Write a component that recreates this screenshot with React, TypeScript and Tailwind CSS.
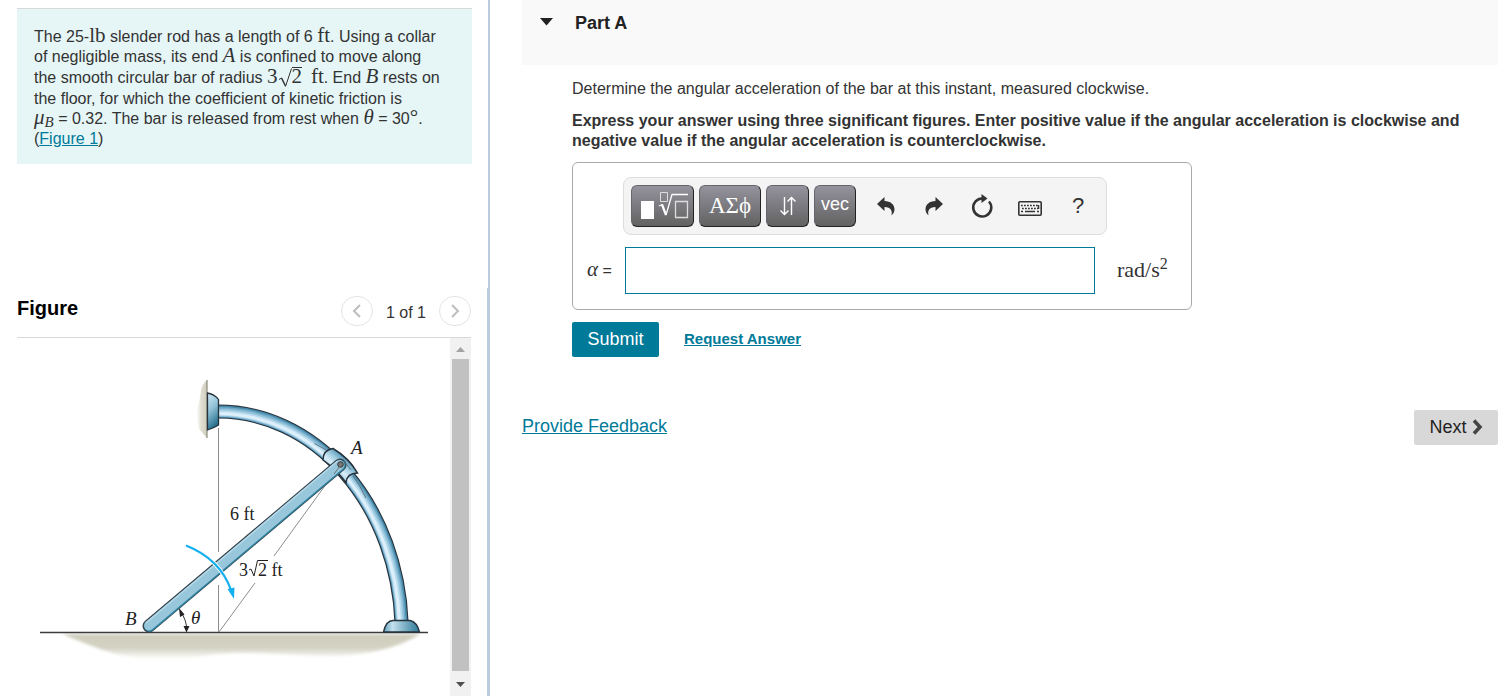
import React from 'react';

interface MathProps {
  children: React.ReactNode;
  italic?: boolean;
}

const MathText: React.FC<MathProps> = ({ children, italic }) => (
  <span className={`font-['Liberation_Serif',serif] text-[21px] leading-[0px] ${italic ? 'italic' : ''}`}>{children}</span>
);

const SquareRoot = () => (
  <span className="whitespace-nowrap font-['Liberation_Serif',serif] text-[21px] leading-[0px]">
    3
    <svg viewBox="0 0 14 22" className="inline-block h-[22px] w-[14px] align-[-6px]" fill="none" stroke="#333">
      <path d="M1 12.5l2.5-1.5" strokeWidth="1" />
      <path d="M3.5 11l4 8" strokeWidth="1.6" />
      <path d="M7.5 19.5L13.500 1.500" strokeWidth="1" />
    </svg>
    <span className="inline-block border-t border-[#333] leading-4">2</span>
  </span>
);

const ProblemStatement = () => (
  <div className="ml-[17px] mr-4 mt-2 border-t border-[#d8d8d8] bg-[#e6f6f7] px-[17px] pb-[15px] pt-[18px] text-[16px] leading-5 text-[#333]">
    The 25-<MathText>lb</MathText> slender rod has a length of 6 <MathText>ft</MathText>. Using a collar
    <br />
    of negligible mass, its end <MathText italic>A</MathText> is confined to move along
    <br />
    the smooth circular bar of radius <SquareRoot />&nbsp; <MathText>ft</MathText>. End <MathText italic>B</MathText> rests on
    <br />
    the floor, for which the coefficient of kinetic friction is
    <br />
    <MathText italic>μ</MathText>
    <sub className="bottom-[-3px] font-['Liberation_Serif',serif] text-[15px] italic">B</sub> = 0.32. The bar is released from rest when{' '}
    <MathText italic>θ</MathText> = 30<MathText>°</MathText>.
    <br />
    (<a href="#figure" className="text-[#007a99] underline">Figure 1</a>)
  </div>
);

const ARC = 'M218 411.5A183.5 221 0 0 1 401.5 622';

// Quarter-circle bar with its two supports, the collar at A and the rod AB
const RodFigure = () => (
  <svg viewBox="17 338 433 358" className="h-[358px] w-[433px] shrink-0" role="img" aria-label="Slender rod AB on a circular bar">
    <defs>
      <linearGradient id="wall" x1="0" x2="1">
        <stop offset="0" stopColor="#fff" />
        <stop offset="0.5" stopColor="#dddccf" />
        <stop offset="1" stopColor="#cfcebd" />
      </linearGradient>
      <linearGradient id="ground" x1="0" x2="0" y1="0" y2="1">
        <stop offset="0" stopColor="#cfcebd" />
        <stop offset="0.55" stopColor="#d3d2c3" />
        <stop offset="1" stopColor="#fff" />
      </linearGradient>
      <linearGradient id="mount" x1="0" x2="0.3" y1="0" y2="1">
        <stop offset="0" stopColor="#d5ecf7" />
        <stop offset="0.5" stopColor="#8fc0d6" />
        <stop offset="1" stopColor="#26718f" />
      </linearGradient>
      <linearGradient id="foot" x1="0" x2="1">
        <stop offset="0" stopColor="#5f9fbc" />
        <stop offset="0.25" stopColor="#c3e0ee" />
        <stop offset="1" stopColor="#2c7897" />
      </linearGradient>
      <linearGradient id="collar" gradientUnits="userSpaceOnUse" x1="333" y1="474" x2="347" y2="458">
        <stop offset="0" stopColor="#8cbdd5" />
        <stop offset="0.35" stopColor="#d9eef9" />
        <stop offset="0.65" stopColor="#9fcbe0" />
        <stop offset="1" stopColor="#4a8fb0" />
      </linearGradient>
      <filter id="soft" x="-10%" y="-30%" width="120%" height="160%">
        <feGaussianBlur stdDeviation="1.500" />
      </filter>
    </defs>

    <path d="M207 380C198 388 202 396 198 405C194 414 199 424 199 429L207 438Z" fill="url(#wall)" />
    <path d="M207 380V438" stroke="#8c8b7e" strokeWidth="1.200" />
    <g filter="url(#soft)">
      <path d="M62 634H420C395 650 360 656 330 656C280 656 250 650 210 655C170 662 130 660 100 649C84 643 72 638 62 634Z" fill="url(#ground)" />
    </g>
    <path d="M40 632.500H428" stroke="#3d3d3d" strokeWidth="1.500" />

    <g stroke="#8d8d8d" strokeWidth="1">
      <path d="M218.500 428V552M218.500 585V632" />
      <path d="M340 465L274 556M255 583L219 632" />
    </g>

    <g fill="none">
      <path d={ARC} stroke="#29323a" strokeWidth="14.200" />
      <path d={ARC} stroke="#4488a9" strokeWidth="12" />
      <path d="M218 412A183 220.500 0 0 1 401 622" stroke="#6fa9c7" strokeWidth="10" />
      <path d="M218 412.500A182.500 220 0 0 1 400.500 622" stroke="#93c2db" strokeWidth="8" />
      <path d="M218 413A182 219.500 0 0 1 400 622" stroke="#b8dbed" strokeWidth="5.500" />
      <path d="M218 413.500A181.500 219 0 0 1 399.500 622" stroke="#dceffa" strokeWidth="3" />
      <path d="M314.500 443.500L333 453.500M353 476Q360 485 366 498" stroke="#5f7480" strokeWidth="1" />
    </g>

    <path d="M207.500 393Q215 394.500 218.500 399.500V425Q214 428 207.500 430Z" fill="url(#mount)" stroke="#26333c" strokeWidth="1.300" />
    <path d="M383.500 632Q386 620.500 393 620.500H410Q417 622 419.500 632Z" fill="url(#foot)" stroke="#26333c" strokeWidth="1.300" />

    <path d="M323 460Q323 450 333 448.500Q349 458 357.500 473Q347 473 346 482.500Q336 469 323 460Z" fill="url(#collar)" stroke="#25313a" strokeWidth="1.500" />

    <g strokeLinecap="round">
      <path d="M149 626L340 465" stroke="#38444c" strokeWidth="13" />
      <path d="M149.500 626.200L340 465.500" stroke="#2f829f" strokeWidth="11" />
      <path d="M149 625.500L339.500 465" stroke="#98c7dc" strokeWidth="9.800" />
      <path d="M146.500 622.500L337 461.500" stroke="#b4d8e8" strokeWidth="1.500" />
    </g>
    <circle cx="340.500" cy="464.500" r="2.800" fill="#777" stroke="#333" />
    <path d="M344 461L351 470" stroke="#5f7480" strokeWidth="1" />
    <path d="M340 466L334 474" stroke="#66737a" strokeWidth="1" />

    <path d="M186 545.500Q220 559 231 590" fill="none" stroke="#fff" strokeWidth="4" />
    <path d="M186 545.500Q220 559 231 590" fill="none" stroke="#12b0f0" strokeWidth="2.200" />
    <path d="M227.500 589L234.500 587.500L234 599Z" fill="#12b0f0" />

    <path d="M180 611Q187 620 186.500 630" fill="none" stroke="#333" strokeWidth="1" />
    <path d="M179 608L184.500 614.500L180 617Z M186.500 632.500L183.500 626H189.500Z" fill="#222" />

    <g className="font-['Liberation_Serif',serif] text-[19px]" fill="#222">
      <text x="351" y="454" fontStyle="italic">A</text>
      <text x="125" y="625" fontStyle="italic">B</text>
      <text x="191" y="624" fontStyle="italic">θ</text>
      <text x="230" y="520" className="text-[18px]">6 ft</text>
      <text x="239" y="576" className="text-[18px]">3</text>
      <text x="258" y="576" className="text-[18px]">2 ft</text>
    </g>
    <path d="M249 570L251 569L254 576L257.500 560.500H268" fill="none" stroke="#222" strokeWidth="1" />
  </svg>
);

const PageButton: React.FC<{ label: string; path: string }> = ({ label, path }) => (
  <button aria-label={label} className="flex h-[30px] w-8 items-center justify-center rounded-full border border-[#e4e4e4] bg-white">
    <svg viewBox="0 0 10 14" className="h-[14px] w-[10px]" fill="none" stroke="#bdbdbd" strokeWidth="2">
      <path d={path} />
    </svg>
  </button>
);

const FigurePanel = () => (
  <section id="figure" className="flex flex-1 flex-col border-r-[3px] border-[#b9cbdc] pl-[17px] pr-4">
    <div className="flex h-[50px] justify-between border-b border-[#d8d8d8]">
      <h2 className="mt-2 text-[20px] font-bold leading-6 text-black">Figure</h2>
      <div className="mt-2 flex h-[30px] items-center">
        <PageButton label="Previous figure" path="M8 1L2 7l6 6" />
        <span className="mt-1 w-[66px] text-center text-[16px] text-[#333]">1 of 1</span>
        <PageButton label="Next figure" path="M2 1l6 6-6 6" />
      </div>
    </div>
    <div className="flex flex-1 justify-between">
      <RodFigure />
      <div className="flex w-[21px] shrink-0 flex-col items-center bg-[#f1f1f1]">
        <svg viewBox="0 0 21 21" className="h-[21px] w-[21px]">
          <path d="M6 14h9l-4.500-5z" fill="#a3a3a3" />
        </svg>
        <div className="w-[17px] flex-1 bg-[#c1c1c1]" />
        <svg viewBox="0 0 21 25" className="h-[25px] w-[21px]">
          <path d="M6 11h9l-4.500 5z" fill="#505050" />
        </svg>
      </div>
    </div>
  </section>
);

const keyClass =
  'flex h-[42px] items-center justify-center rounded-[6px] border border-[#66656c] border-b-[#222] border-r-[#222] bg-linear-to-b from-[#95939d] to-[#626262] text-white';
const iconClass = 'flex h-[42px] w-12 items-center justify-center text-[#333]';

const Toolbar = () => (
  <div className="ml-[50px] flex h-[58px] w-[484px] items-center rounded-lg border border-[#ddd] bg-[#f4f4f4] pl-[7px]">
    <div className="flex gap-[5px]">
      <button aria-label="Templates" className={`${keyClass} w-[63px]`}>
        <svg viewBox="0 0 63 42" className="h-[42px] w-[63px] shrink-0" fill="none" stroke="#fff">
          <path d="M10 16h13v18H10z" fill="#fff" stroke="none" />
          <path d="M29.500 7.500h7v9h-7z" stroke="#ddd" />
          <path d="M28 21l3-1.500" strokeWidth="1.200" />
          <path d="M31 19.500l4 10.500" strokeWidth="2.200" />
          <path d="M35 30l6-20.500h16" strokeWidth="1.300" />
          <path d="M44.500 16.500h12v16h-12z" stroke="#ddd" strokeWidth="1.300" />
        </svg>
      </button>
      <button aria-label="Symbols" className={`${keyClass} w-[62px] font-['Liberation_Serif',serif] text-[23px]`}>
        ΑΣϕ
      </button>
      <button aria-label="Arrows" className={`${keyClass} w-[43px]`}>
        <svg viewBox="0 0 18 20" className="h-5 w-[18px]" fill="none" stroke="#fff" strokeWidth="1.400">
          <path d="M5.500 1v17.500M1.500 14.500l4 4 4-4M12.500 19V1.500M8.500 5.500l4-4 4 4" />
        </svg>
      </button>
      <button className={`${keyClass} w-[42px] pb-1 text-[18px]`}>vec</button>
    </div>
    <div className="ml-[6px] flex">
      <button aria-label="Undo" className={iconClass}>
        <svg viewBox="0 0 18 20" className="h-5 w-[18px]" fill="currentColor">
          <path d="M0 8L7.500 1v4c6 0 10 3.500 10 8.500 0 2.500-1.500 4.500-3 6C15.500 14.500 14 11.200 7.500 11V15z" />
        </svg>
      </button>
      <button aria-label="Redo" className={iconClass}>
        <svg viewBox="0 0 18 20" className="h-5 w-[18px]" fill="currentColor">
          <path d="M18 8L10.500 1v4c-6 0-10 3.500-10 8.500 0 2.500 1.500 4.500 3 6C2.500 14.500 4 11.200 10.500 11V15z" />
        </svg>
      </button>
      <button aria-label="Reset" className={iconClass}>
        <svg viewBox="0 0 22 24" className="h-6 w-[22px]" fill="none" stroke="currentColor" strokeWidth="2.600">
          <path d="M12 4.500A9 9 0 1 0 18 7.500" />
          <path d="M10.500 0l6 4.500-6 4.500z" fill="currentColor" stroke="none" />
        </svg>
      </button>
      <button aria-label="Keyboard" className={iconClass}>
        <svg viewBox="0 0 24 15" className="mt-1 h-[15px] w-6" fill="none" stroke="currentColor">
          <rect x="0.800" y="0.800" width="22.400" height="13.400" rx="1" strokeWidth="1.600" />
          <path d="M3 4.500h18M4 7.500h16" strokeWidth="1.500" strokeDasharray="1.800 1.200" />
          <path d="M3 10.500h2M7 10.500h10M19 10.500h2M20.500 4v4" strokeWidth="1.500" />
        </svg>
      </button>
      <button aria-label="Help" className={`${iconClass} text-[22px]`}>?</button>
    </div>
  </div>
);

const AnswerBox = () => (
  <div className="mt-[11px] h-[148px] max-w-[620px] rounded-md border border-[#aaa] pt-[14px]">
    <Toolbar />
    <div className="mt-3 flex h-[47px] items-center pl-[14px]">
      <label htmlFor="alpha" className="w-[38px] text-[16px] text-[#333]">
        <span className="font-['Liberation_Serif',serif] text-[21px] italic leading-[0px]">α</span> =
      </label>
      <input id="alpha" type="text" className="h-[47px] w-[470px] border border-[#007a99] bg-white px-2 outline-none" />
      <span className="ml-[22px] pb-[2px] font-['Liberation_Serif',serif] text-[22px] text-[#333]">
        rad/s<sup className="text-[16px]">2</sup>
      </span>
    </div>
  </div>
);

export default function App() {
  return (
    <div className="flex min-h-screen bg-white font-['Liberation_Sans',Arial,sans-serif]">
      <aside className="flex w-[490px] shrink-0 flex-col">
        <div className="flex h-[288px] flex-col border-r-2 border-[#b9cbdc]">
          <ProblemStatement />
        </div>
        <FigurePanel />
      </aside>

      <main className="ml-8 mr-[10px] flex-1">
        <header className="flex h-[65px] bg-[#f9f9f9] pl-[18px] pt-3">
          <button aria-label="Collapse Part A" className="h-5 w-[35px]">
            <svg viewBox="0 0 13 8" className="h-2 w-[13px]">
              <path d="M0 0h13L6.500 7.500z" fill="#222" />
            </svg>
          </button>
          <h1 className="text-[18px] font-bold leading-[22px] text-[#222]">Part A</h1>
        </header>

        <div className="pl-[50px] text-[16px] leading-5 text-[#333]">
          <p className="mt-[14px]">Determine the angular acceleration of the bar at this instant, measured clockwise.</p>
          <p className="mt-3 font-bold">
            Express your answer using three significant figures. Enter positive value if the angular acceleration is clockwise and negative value if the angular acceleration is counterclockwise.
          </p>
          <AnswerBox />
          <div className="mt-3 flex items-center">
            <button className="h-[35px] w-[87px] rounded-[2px] bg-[#007a99] pb-px text-[18px] text-white">Submit</button>
            <a href="#answer" className="ml-[25px] pb-px text-[15px] font-bold text-[#007a99] underline">Request Answer</a>
          </div>
        </div>

        <div className="mt-[53px] flex items-center justify-between text-[18px]">
          <a href="#feedback" className="pb-[2px] text-[#007a99] underline">Provide Feedback</a>
          <button className="flex h-[35px] w-[84px] items-center justify-center gap-[5px] rounded-[2px] bg-[#d8d8d8] text-[#222]">
            Next
            <svg viewBox="0 0 11 16" className="mb-[2px] h-4 w-[11px]" fill="none" stroke="#444" strokeWidth="3.500">
              <path d="M2 1.500L8 8l-6 6.500" />
            </svg>
          </button>
        </div>
      </main>
    </div>
  );
}
